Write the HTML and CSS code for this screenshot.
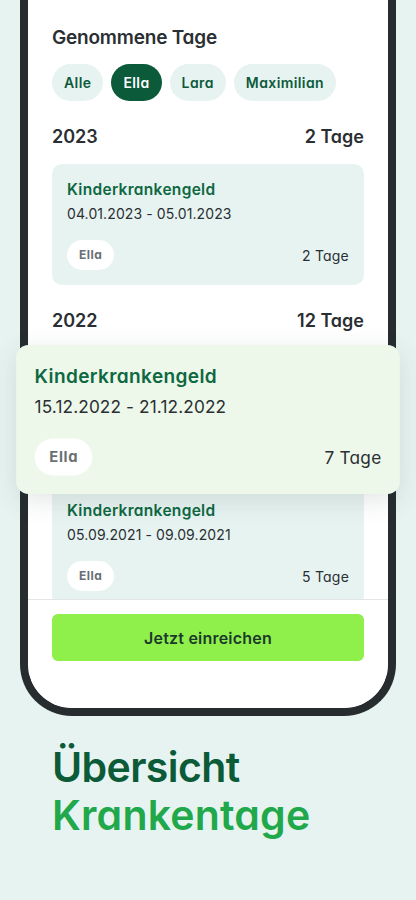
FILE: index.html
```html
<!DOCTYPE html>
<html lang="de">
  <head>
    <meta charset="UTF-8" />
    <meta name="viewport" content="width=device-width, initial-scale=1.0" />
    <title>Übersicht Krankentage</title>
    <link rel="stylesheet" href="styles.css">
  </head>
  <body>
    <div class="phone">
      <div class="list">
        <h2 class="section-title">Genommene Tage</h2>
        <div class="filters">
          <span class="chip">Alle</span>
          <span class="chip active">Ella</span>
          <span class="chip">Lara</span>
          <span class="chip">Maximilian</span>
        </div>

        <div class="year">
          <div class="year-head"><span>2023</span><span>2 Tage</span></div>
          <div class="entry">
            <div class="entry-title">Kinderkrankengeld</div>
            <div class="entry-dates">04.01.2023 - 05.01.2023</div>
            <div class="entry-foot">
              <span class="tag">Ella</span>
              <span class="days">2 Tage</span>
            </div>
          </div>
        </div>

        <div class="year">
          <div class="year-head"><span>2022</span><span>12 Tage</span></div>
          <div class="entry lifted">
            <div class="entry-title">Kinderkrankengeld</div>
            <div class="entry-dates">15.12.2022 - 21.12.2022</div>
            <div class="entry-foot">
              <span class="tag">Ella</span>
              <span class="days">7 Tage</span>
            </div>
          </div>
          <div class="entry">
            <div class="entry-title">Kinderkrankengeld</div>
            <div class="entry-dates">05.09.2021 - 09.09.2021</div>
            <div class="entry-foot">
              <span class="tag">Ella</span>
              <span class="days">5 Tage</span>
            </div>
          </div>
        </div>
      </div>

      <div class="footer">
        <button type="button" class="submit">Jetzt einreichen</button>
      </div>
    </div>

    <h1 class="claim">
      <span class="claim-dark">Übersicht</span>
      <span class="claim-light">Krankentage</span>
    </h1>
  </body>
</html>
```

FILE: styles.css
```css
body {
  margin: 0;
  background-color: #e7f3f1;
  font-family: Inter, "Liberation Sans", sans-serif;
  font-feature-settings: "cv11";
  color: #2a2f33;
}

.phone {
  margin: 0 20px;
  background-color: #fff;
  border: 8px solid #272c2f;
  border-top: none;
  border-radius: 0 0 52px 52px;
}

.list {
  height: 599px;
  padding: 26px 24px 0;
  box-sizing: border-box;
}

.section-title {
  margin: 0;
  font-size: 19px;
  line-height: 24px;
  font-weight: 600;
  letter-spacing: -0.2px;
}

.filters {
  display: flex;
  gap: 8px;
  margin-top: 14px;
}

.chip {
  height: 37px;
  line-height: 37px;
  padding: 0 12px;
  border-radius: 19px;
  background-color: #e7f3f1;
  color: #0c5a3b;
  font-size: 14px;
  font-weight: 600;
  letter-spacing: 0.4px;
}

.chip.active {
  background-color: #0b5a3a;
  color: #fff;
}

.year {
  margin-top: 24px;
}

.year-head {
  display: flex;
  justify-content: space-between;
  font-size: 18px;
  line-height: 24px;
  font-weight: 600;
}

.entry {
  margin-top: 15px;
  padding: 16px 15px 15px;
  border-radius: 10px;
  background-color: #e7f3f1;
}

.entry + .entry {
  margin-top: 16px;
}

.entry-title {
  font-size: 15.5px;
  line-height: 20px;
  font-weight: 600;
  color: #0e6841;
  letter-spacing: 0.3px;
}

.entry-dates {
  margin-top: 4px;
  font-size: 14px;
  line-height: 20px;
  letter-spacing: 0.1px;
}

.entry-foot {
  display: flex;
  justify-content: space-between;
  align-items: center;
  margin-top: 16px;
}

.tag {
  height: 30px;
  line-height: 30px;
  padding: 0 12px;
  border-radius: 15px;
  background-color: #fff;
  color: #6a6f73;
  font-size: 12px;
  font-weight: 700;
  letter-spacing: 0.5px;
}

.days {
  font-size: 14px;
  letter-spacing: 0.2px;
}

.lifted {
  position: relative;
  z-index: 2;
  background-color: #edf8ea;
  box-shadow: 0 5px 22px rgba(30, 60, 50, 0.12);
  transform: translateY(11px) scale(1.23);
}

.footer {
  position: relative;
  z-index: 1;
  height: 109px;
  padding: 14px 24px 0;
  box-sizing: border-box;
  background-color: #fff;
  border-top: 1px solid #e3e6e6;
  border-radius: 0 0 44px 44px;
}

.submit {
  display: block;
  width: 100%;
  height: 47px;
  border: none;
  border-radius: 6px;
  background-color: #8ff04b;
  color: #1b3a2b;
  font-family: inherit;
  font-feature-settings: "cv11";
  font-size: 16px;
  font-weight: 600;
  letter-spacing: 0.2px;
}

.claim {
  margin: 27px 0 0;
  padding: 0 52px;
  font-size: 41px;
  line-height: 48px;
  font-weight: 600;
}

.claim span {
  display: block;
}

.claim-dark {
  color: #0b5a38;
  letter-spacing: -0.6px;
}

.claim-light {
  color: #20a84a;
  letter-spacing: 0.2px;
}
```
